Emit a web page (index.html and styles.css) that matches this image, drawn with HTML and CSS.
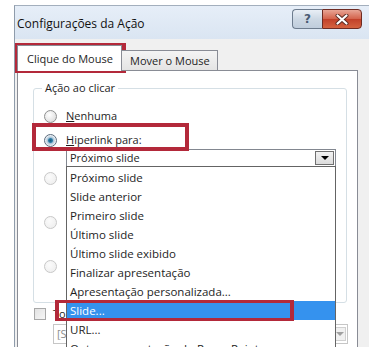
FILE: index.html
```html
<!DOCTYPE html>
<html>
  <head>
    <title>Configurações da Ação</title>
    <meta charset="utf-8">
    <link rel="stylesheet" href="styles.css">
  </head>
  <body>
    <div class="shot">
      <div class="window">
        <div class="titlebar">
          <span class="title">Configurações da Ação</span>
          <div class="caption-buttons">
            <span class="btn-help">?</span>
            <span class="btn-close">
              <svg width="14" height="11" viewBox="0 0 14 11">
                <path d="M2.5 1.5 L11.5 9.5 M11.5 1.5 L2.5 9.5" stroke="#5a2a22" stroke-width="4" stroke-linecap="round"/>
                <path d="M2.5 1.5 L11.5 9.5 M11.5 1.5 L2.5 9.5" stroke="#ffffff" stroke-width="2.2" stroke-linecap="round"/>
              </svg>
            </span>
          </div>
        </div>
        <div class="client">
          <div class="tabs">
            <div class="tab tab-active">Clique do Mouse</div>
            <div class="tab">Mover o Mouse</div>
          </div>
          <div class="panel">
            <fieldset class="group">
              <legend>Ação ao clicar</legend>
              <div class="option">
                <span class="radio"></span>
                <span><u>N</u>enhuma</span>
              </div>
              <div class="option">
                <span class="radio radio-checked"></span>
                <span><u>H</u>iperlink para:</span>
              </div>
              <div class="combo">
                <span class="combo-text">Próximo slide</span>
                <span class="combo-button"><span class="arrow"></span></span>
              </div>
              <!-- the other choices sit under the open list, only their radios show -->
              <div class="option option-block option-disabled">
                <span class="radio"></span>
              </div>
              <div class="option option-block option-disabled">
                <span class="radio"></span>
              </div>
              <div class="option option-block option-disabled">
                <span class="radio"></span>
              </div>
            </fieldset>
            <div class="option sound-row">
              <span class="checkbox"></span>
              <span>To</span>
            </div>
            <div class="combo combo-disabled">
              <span class="combo-text">[S</span>
              <span class="combo-button"><span class="arrow"></span></span>
            </div>

            <!-- open dropdown of the hyperlink combo -->
            <ul class="dropdown">
              <li>Próximo slide</li>
              <li>Slide anterior</li>
              <li>Primeiro slide</li>
              <li>Último slide</li>
              <li>Último slide exibido</li>
              <li>Finalizar apresentação</li>
              <li>Apresentação personalizada...</li>
              <li class="selected">Slide...</li>
              <li>URL...</li>
              <li>Outra apresentação do PowerPoint...</li>
            </ul>
          </div>
        </div>
      </div>

      <!-- red annotation boxes -->
      <div class="mark mark-tab"></div>
      <div class="mark mark-link"></div>
      <div class="mark mark-slide"></div>
    </div>
  </body>
</html>
```

FILE: styles.css
```css
* {
  box-sizing: border-box;
}
body {
  margin: 0;
  width: 369px;
  height: 357px;
  overflow: hidden;
  background: #ffffff;
  font-family: "Open Sans", "Noto Sans", sans-serif;
  font-size: 11px;
  color: #1e1e1e;
}
.shot {
  position: relative;
  width: 369px;
  height: 357px;
  padding: 5px 0 0 14px;
}
.window {
  width: 355px;
  height: 342px;
  overflow: hidden;
  border-left: 1px solid #8f9cab;
  border-top: 1px solid #a3afbd;
  background: #f0f0f0;
}
.titlebar {
  display: flex;
  justify-content: space-between;
  align-items: flex-start;
  height: 33px;
  background: linear-gradient(#e6eef8, #dae5f2);
}
.title {
  margin: 10px 0 0 2px;
  font-size: 12px;
  line-height: 16px;
  color: #111;
}
.caption-buttons {
  display: flex;
  margin: 3px 7px 0 0;
}
.btn-help,
.btn-close {
  display: flex;
  justify-content: center;
  align-items: center;
  height: 20px;
  border: 1px solid #6d7c8e;
}
.btn-help {
  width: 30px;
  border-right: none;
  border-radius: 4px 0 0 4px;
  background: linear-gradient(#e9eff6, #cdd8e4 50%, #bfcddc);
  font-family: "DejaVu Sans", sans-serif;
  font-size: 12px;
  font-weight: bold;
  color: #4a5b72;
}
.btn-close {
  width: 40px;
  border-color: #6e2b22;
  border-radius: 0 4px 4px 0;
  background: linear-gradient(#e8a595, #d4644d 48%, #c2412a 52%, #d4623f);
}
.client {
  padding: 6px 0 0 2px;
}
.tabs {
  display: flex;
  align-items: flex-end;
  position: relative;
  z-index: 1;
  margin-bottom: -1px;
}
.tab {
  height: 21px;
  padding: 0 7px 0 8px;
  line-height: 19px;
  white-space: nowrap;
  border: 1px solid #898c95;
  border-left: none;
  background: linear-gradient(#f4f4f4, #e4e4e4);
}
.tab-active {
  height: 26px;
  width: 105px;
  padding: 3px 0 0 9px;
  border-left: 1px solid #898c95;
  border-bottom: none;
  background: #ffffff;
}
.panel {
  position: relative;
  width: 341px;
  height: 290px;
  border: 1px solid #898c95;
  background: #ffffff;
}
.group {
  width: 314px;
  margin: 9px 0 0 15px;
  padding: 0 10px 2px;
  border: 1px solid #d5dfe5;
  border-radius: 3px;
}
.group legend {
  padding: 0 3px;
  margin-left: -2px;
  line-height: 16px;
}
.option {
  display: flex;
  align-items: center;
  gap: 9px;
  height: 20px;
  line-height: 20px;
  white-space: nowrap;
}
.group legend + .option {
  margin-top: 10px;
}
.option + .option {
  margin-top: 4px;
}
.option-block {
  height: 44px;
  align-items: flex-start;
}
.option-block .radio {
  margin-top: 4px;
}
.option + .option-block,
.option-block + .option-block {
  margin-top: 0;
}
.combo + .option-block {
  margin-top: 1px;
}
.radio {
  flex: none;
  width: 13px;
  height: 13px;
  border: 1px solid #8e8f8f;
  border-radius: 50%;
  background: radial-gradient(circle at 40% 35%, #ffffff, #e6e6e6 60%, #cfcfcf);
}
.radio-checked {
  border-color: #5b6b7d;
  background: radial-gradient(circle at 50% 50%, #1a5b7a 0, #2a7ca8 25%, #a9c3d6 38%, #f3f6f9 70%, #dfe5ea);
}
.option-disabled .radio {
  border-color: #c8c8c8;
  background: radial-gradient(circle at 40% 35%, #fbfbfb, #ececec);
}
.combo {
  display: flex;
  justify-content: space-between;
  align-items: center;
  width: 270px;
  height: 18px;
  margin: -1px 0 0 22px;
  padding: 0 1px 0 3px;
  border: 1px solid #828790;
  background: #ffffff;
}
.combo-text {
  line-height: 16px;
}
.combo-button {
  display: flex;
  justify-content: center;
  align-items: center;
  width: 19px;
  height: 14px;
  border: 1px solid #707070;
  background: linear-gradient(#f2f2f2, #dcdcdc);
}
.arrow {
  width: 0;
  height: 0;
  border-left: 4px solid transparent;
  border-right: 4px solid transparent;
  border-top: 4px solid #000000;
}
.sound-row {
  margin: 1px 0 0 16px;
  gap: 7px;
}
.checkbox {
  flex: none;
  width: 12px;
  height: 12px;
  border: 1px solid #a8a8a8;
  background: linear-gradient(135deg, #e2e2e2, #f6f6f6);
}
.combo-disabled {
  width: 295px;
  height: 20px;
  margin: 0 0 0 35px;
  border-color: #c6c6c6;
  color: #8d8d8d;
}
.combo-disabled .combo-button {
  width: 13px;
  border-color: #d0d0d0;
  background: #f0f0f0;
}
.combo-disabled .arrow {
  border-top-color: #a0a0a0;
}
.dropdown {
  position: absolute;
  left: 48px;
  top: 95px;
  width: 270px;
  margin: 0;
  padding: 1px 0 0;
  list-style: none;
  border: 1px solid #646464;
  background: #ffffff;
  font-size: 11.5px;
}
.dropdown li {
  height: 19px;
  padding-left: 3px;
  line-height: 19px;
  white-space: nowrap;
}
.dropdown li.selected {
  background: #3592ee;
  color: #ffffff;
}
.mark {
  position: absolute;
  border: 4px solid #b3293a;
}
.mark-tab {
  left: 15px;
  top: 43px;
  width: 111px;
  height: 30px;
}
.mark-link {
  left: 32px;
  top: 123px;
  width: 157px;
  height: 28px;
}
.mark-slide {
  left: 55px;
  top: 300px;
  width: 239px;
  height: 21px;
  border-width: 3px 4px;
}
```
